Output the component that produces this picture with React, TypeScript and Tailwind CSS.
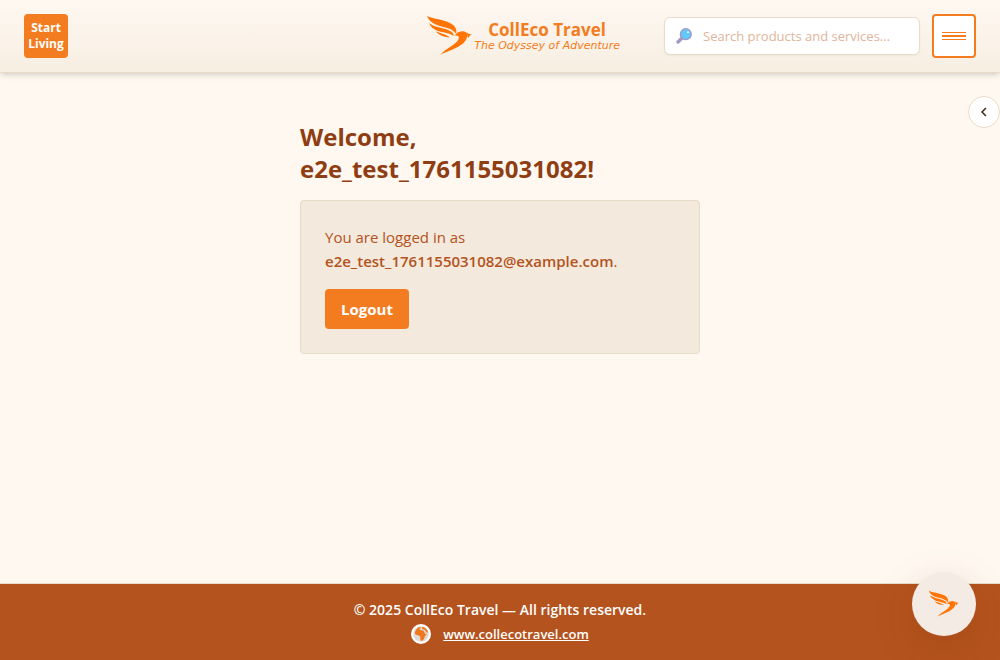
import React from "react";

function Bird({ className }: { className: string }) {
  return (
    <svg viewBox="0 0 144 126" className={className} fill="#ff7405" aria-hidden="true">
      <path d="M3 3C20 11 48 13 70 23C86 30 93 40 91 57C82 44 66 39 44 34C23 28 9 18 3 3Z" />
      <path d="M10 25C26 37 48 38 66 45C78 50 84 55 83 63C70 54 52 53 38 49C23 43 13 36 10 25Z" />
      <path d="M30 49C44 57 58 56 72 68C56 66 40 64 30 49Z" />
      <path d="M85 62C92 53 101 49 110 49C118 49 123 53 124 60C122 91 84 101 43 119C60 100 92 88 98 72C101 63 93 60 85 62Z" />
      <path d="M122 50C127 58 132 58 138 57C133 60 130 64 126 70Z" />
    </svg>
  );
}

function Magnifier() {
  return (
    <svg viewBox="0 0 16 16" className="pointer-events-none absolute left-3 top-1/2 h-4 w-4 -translate-y-1/2" aria-hidden="true">
      <path d="M6 10L2 14" stroke="#a497c4" strokeWidth="3.4" strokeLinecap="round" />
      <circle cx="9.8" cy="6.2" r="5.4" fill="#62c8f8" stroke="#9b9bcc" strokeWidth="1.4" />
      <circle cx="12" cy="4.2" r="0.9" fill="#fff" />
    </svg>
  );
}

function Globe() {
  return (
    <svg viewBox="0 0 20 20" className="h-5 w-5" aria-hidden="true">
      <circle cx="10" cy="10" r="10" fill="#fff" />
      <circle cx="10" cy="10" r="7.8" fill="#dedad6" />
      <path
        d="M4 8C5 5 7 3 9 3L10 4L8 5L10 6L13 7L14 10L16 10L14 12L13 15L11 17L9.5 16L9 12L6 11L4 10ZM11 3C14 3 16 5 17 8L16 9L14 6L11 5Z"
        fill="#f0771c"
      />
    </svg>
  );
}

export default function App() {
  return (
    <div className="flex min-h-screen flex-col bg-[#fff8f1] font-['Open_Sans','Noto_Sans',sans-serif] text-[#b4531d]">
      <header className="flex items-center border-b border-[#e8dcc8] bg-gradient-to-b from-[#fff8f1] to-[#f7eee2] px-6 py-3.5 shadow-md">
        <button type="button" className="h-11 w-11 rounded bg-[#f47c20] text-xs leading-4 font-bold text-white">
          Start Living
        </button>
        <a href="#home" className="mr-11 ml-auto flex items-center text-[#f47c20]">
          <Bird className="h-[42px] w-12" />
          <span className="flex flex-col items-center">
            <span className="text-[17px] leading-5 font-bold">CollEco Travel</span>
            <span className="font-['DejaVu_Sans',sans-serif] text-[11px] leading-3 italic">The Odyssey of Adventure</span>
          </span>
        </a>
        <div className="relative w-64">
          <Magnifier />
          <input
            type="search"
            aria-label="Search products and services"
            placeholder="Search products and services..."
            className="h-[38px] w-full rounded-md border border-[#e8dcc8] bg-white pr-3 pl-[38px] text-[13px] shadow-xs placeholder:text-[#dfb49b]"
          />
        </div>
        <button
          type="button"
          aria-label="Menu"
          className="ml-3 flex h-11 w-11 items-center justify-center rounded border-2 border-[#f47c20] bg-white"
        >
          <svg viewBox="0 0 24 8" className="h-2 w-6" fill="#f47c20" aria-hidden="true">
            <path d="M0 0H24V1H0ZM0 3H24V5H0ZM0 7H24V8H0Z" />
          </svg>
        </button>
      </header>

      <main className="mx-auto w-full max-w-[400px] flex-1 pt-12">
        <h1 className="mb-[15px] text-2xl leading-8 font-bold text-[#8f3d13]">
          Welcome,
          <br />
          e2e_test_1761155031082!
        </h1>
        <section className="rounded border border-[#e8dcc8] bg-[#f3e9dc] p-6">
          <p className="mb-4 text-[15px] leading-6">
            You are logged in as <strong className="font-semibold">e2e_test_1761155031082@example.com</strong>.
          </p>
          <button type="button" className="h-10 rounded bg-[#f47c20] px-4 text-[15px] font-bold text-white">
            Logout
          </button>
        </section>
      </main>

      <footer className="flex flex-col items-center border-t border-[#e8dcc8] bg-[#b4531d] py-3.5 text-sm leading-6 text-white">
        <p className="font-semibold">© 2025 CollEco Travel — All rights reserved.</p>
        <div className="flex items-center gap-3">
          <Globe />
          <a href="https://www.collecotravel.com" className="text-[13px] font-semibold underline">
            www.collecotravel.com
          </a>
        </div>
      </footer>

      <button
        type="button"
        aria-label="Open side panel"
        className="fixed top-24 right-0 flex h-8 w-8 items-center justify-center rounded-full border border-[#e8dcc8] bg-white text-[#3a2a1e]"
      >
        <svg viewBox="0 0 8 12" className="h-3 w-2" fill="none" stroke="currentColor" strokeWidth="1.5" aria-hidden="true">
          <path d="M6 2L2 6L6 10" />
        </svg>
      </button>
      <button
        type="button"
        aria-label="Open assistant"
        className="fixed right-6 bottom-6 flex h-16 w-16 items-center justify-center rounded-full bg-[#f4ebe5] shadow-[0_12px_40px_rgba(120,50,10,0.18)]"
      >
        <Bird className="h-7 w-8" />
      </button>
    </div>
  );
}
